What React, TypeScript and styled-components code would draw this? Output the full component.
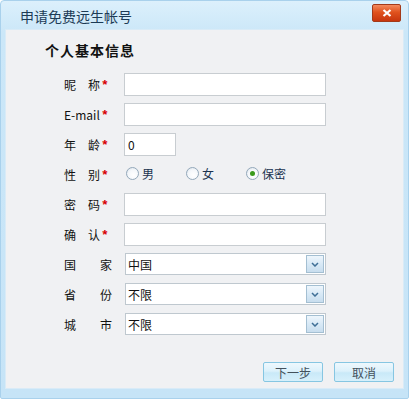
import React from "react";
import styled, { createGlobalStyle } from "styled-components";

const GlobalStyle = createGlobalStyle`
  html, body {
    margin: 0;
    padding: 0;
    background: #ffffff;
    font-family: "Noto Sans CJK SC", "Liberation Sans", sans-serif;
  }
`;

// Window frame
const Window = styled.div`
  box-sizing: border-box;
  width: 409px;
  height: 399px;
  display: flex;
  flex-direction: column;
  border: 1px solid #a9d1ec;
  border-radius: 4px 4px 2px 2px;
  background: linear-gradient(to bottom, #dcf0fc 0%, #cbe7f8 8%, #c6e4f7 100%);
  padding: 0 4px 9px 4px;
`;

const TitleBar = styled.div`
  height: 28px;
  display: flex;
  align-items: center;
  justify-content: space-between;
  padding-left: 15px;
`;

const Title = styled.span`
  font-size: 14px;
  line-height: 16px;
  color: #1c3b56;
  margin-top: 2px;
`;

const CloseButton = styled.button`
  width: 29px;
  height: 18px;
  margin-right: 3px;
  margin-top: -5px;
  padding: 0;
  border: 1px solid #a33a1a;
  border-radius: 2px;
  background: linear-gradient(to bottom, #f38a5e 0%, #e0521e 45%, #c7360e 100%);
  display: flex;
  align-items: center;
  justify-content: center;
  cursor: pointer;
`;

const Panel = styled.div`
  flex: 1;
  display: flex;
  flex-direction: column;
  background: #f0f1f3;
  border: 1px solid #d9ebf7;
  padding: 12px 9px 6px 39px;
`;

const Heading = styled.h2`
  margin: 0;
  font-size: 14px;
  line-height: 16px;
  font-weight: 700;
  color: #111;
  letter-spacing: 1px;
`;

const Form = styled.div`
  display: grid;
  grid-template-columns: 60px 1fr;
  grid-auto-rows: 30px;
  align-items: center;
  margin: 11px 0 0 19px;
`;

const Label = styled.div`
  display: flex;
  align-items: center;
  font-size: 12px;
  color: #111;
`;

const LabelText = styled.span<{ $w: number }>`
  display: inline-block;
  width: ${({ $w }) => $w}px;
  text-align: justify;
  text-align-last: justify;
  white-space: nowrap;
`;

const Star = styled.span`
  color: #d80000;
  font-family: "Liberation Mono", monospace;
  font-size: 13px;
  font-weight: 700;
  margin-left: 1px;
  margin-top: 3px;
`;

const TextInput = styled.input<{ $w?: number }>`
  box-sizing: border-box;
  width: ${({ $w }) => $w ?? 202}px;
  height: 23px;
  border: 1px solid #c8cdd1;
  background: #fff;
  padding: 0 3px;
  font-size: 12px;
  font-family: "Noto Sans CJK SC", "Liberation Sans", sans-serif;
  color: #111;
  outline: none;
`;

const RadioGroup = styled.div`
  display: flex;
  align-items: center;
  margin-top: -2px;
  margin-left: 2px;
`;

const RadioOption = styled.label`
  width: 60px;
  display: flex;
  align-items: center;
  gap: 3px;
  font-size: 12px;
  color: #1b3350;
  cursor: pointer;
`;

const RadioCircle = styled.span<{ $on?: boolean }>`
  box-sizing: border-box;
  width: 13px;
  height: 13px;
  border-radius: 50%;
  border: 1px solid #93a8ba;
  background: radial-gradient(circle at 60% 65%, #ffffff 0%, #f4f7fa 55%, #d5dee6 100%);
  display: flex;
  align-items: center;
  justify-content: center;

  &::after {
    content: "";
    display: ${({ $on }) => ($on ? "block" : "none")};
    width: 5px;
    height: 5px;
    border-radius: 50%;
    background: #3a9a1c;
  }
`;

const SelectBox = styled.div`
  box-sizing: border-box;
  width: 201px;
  height: 22px;
  margin-left: 1px;
  border: 1px solid #bfc8cf;
  background: #fff;
  display: flex;
  align-items: center;
  justify-content: space-between;
  padding: 1px;
  font-size: 12px;
  color: #111;
`;

const SelectValue = styled.span`
  padding-left: 1px;
`;

const DropButton = styled.span`
  box-sizing: border-box;
  width: 18px;
  height: 18px;
  border: 1px solid #a4bfd2;
  background: linear-gradient(to bottom, #eef6fc 0%, #d8e9f6 50%, #c8ddee 100%);
  display: flex;
  align-items: center;
  justify-content: center;
`;

const Footer = styled.div`
  margin-top: auto;
  display: flex;
  justify-content: flex-end;
  gap: 11px;
`;

const ActionButton = styled.button`
  box-sizing: border-box;
  width: 60px;
  height: 20px;
  border: 1px solid #86c6e2;
  border-radius: 2px;
  background: linear-gradient(to bottom, #eef8fd 0%, #dcf1fb 45%, #c9e9f8 55%, #d7f0fb 100%);
  font-size: 12px;
  font-family: "Noto Sans CJK SC", "Liberation Sans", sans-serif;
  color: #44515c;
  padding: 0;
  cursor: pointer;
`;

const Chevron = () => (
  <svg width="8" height="5" viewBox="0 0 8 5">
    <path d="M1 1 L4 4 L7 1" fill="none" stroke="#3f6f96" strokeWidth="1.5" />
  </svg>
);

const fields = [
  { label: "昵称", type: "text" },
  { label: "E-mail", type: "text" },
];

export default function App() {
  return (
    <>
      <GlobalStyle />
      <Window>
        <TitleBar>
          <Title>申请免费远生帐号</Title>
          <CloseButton aria-label="关闭">
            <svg width="10" height="8" viewBox="0 0 10 8">
              <path d="M1.5 1 L8.5 7 M8.5 1 L1.5 7" stroke="#fff" strokeWidth="2.2" />
            </svg>
          </CloseButton>
        </TitleBar>
        <Panel>
          <Heading>个人基本信息</Heading>
          <Form>
            {fields.map((f) => (
              <React.Fragment key={f.label}>
                <Label>
                  <LabelText $w={36}>{f.label}</LabelText>
                  <Star>*</Star>
                </Label>
                <TextInput type={f.type} />
              </React.Fragment>
            ))}

            <Label>
              <LabelText $w={36}>年龄</LabelText>
              <Star>*</Star>
            </Label>
            <TextInput $w={52} defaultValue="0" />

            <Label>
              <LabelText $w={36}>性别</LabelText>
              <Star>*</Star>
            </Label>
            <RadioGroup>
              <RadioOption>
                <RadioCircle />男
              </RadioOption>
              <RadioOption>
                <RadioCircle />女
              </RadioOption>
              <RadioOption>
                <RadioCircle $on />保密
              </RadioOption>
            </RadioGroup>

            <Label>
              <LabelText $w={36}>密码</LabelText>
              <Star>*</Star>
            </Label>
            <TextInput type="password" />

            <Label>
              <LabelText $w={36}>确认</LabelText>
              <Star>*</Star>
            </Label>
            <TextInput type="password" />

            {[
              ["国家", "中国"],
              ["省份", "不限"],
              ["城市", "不限"],
            ].map(([label, value]) => (
              <React.Fragment key={label}>
                <Label>
                  <LabelText $w={48}>{label}</LabelText>
                </Label>
                <SelectBox>
                  <SelectValue>{value}</SelectValue>
                  <DropButton>
                    <Chevron />
                  </DropButton>
                </SelectBox>
              </React.Fragment>
            ))}
          </Form>
          <Footer>
            <ActionButton>下一步</ActionButton>
            <ActionButton>取消</ActionButton>
          </Footer>
        </Panel>
      </Window>
    </>
  );
}
